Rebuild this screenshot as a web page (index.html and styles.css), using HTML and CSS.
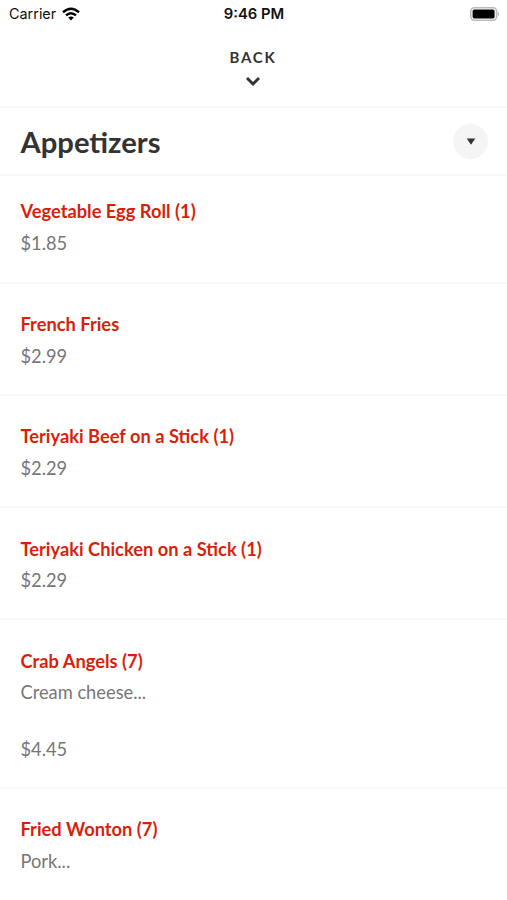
FILE: index.html
```html
<!DOCTYPE html>
<html lang="en">
<head>
<meta charset="utf-8">
<title>Appetizers</title>
<link rel="stylesheet" href="styles.css">
</head>
<body>
<header class="status">
  <div class="carrier"><span>Carrier</span>
    <svg class="wifi" viewBox="0 0 18 14"><g fill="none" stroke="#000" stroke-width="2.5"><path d="M1 5.2Q9-1.7 17 5.2"/><path d="M4 8.4Q9 4.1 14 8.4"/></g><path d="M6.2 10.6Q9 8.4 11.8 10.6L9 13.4Z"/></svg>
  </div>
  <div class="time">9:46 PM</div>
  <svg class="battery" viewBox="0 0 30 14"><rect x=".8" y=".8" width="25.8" height="12.4" rx="3.6" fill="none" stroke="#bbb" stroke-width="1.6"/><rect x="2.6" y="2.6" width="22" height="8.8" rx="1.6"/><path d="M27.8 4.7Q30.8 7 27.8 9.3Z" fill="#bbb"/></svg>
</header>
<nav class="back">
  <span class="back-label">BACK</span>
  <svg class="chevron" viewBox="0 0 16 10"><path d="M2 2L8 8L14 2" fill="none" stroke="#333" stroke-width="2.9"/></svg>
</nav>
<div class="section">
  <h1>Appetizers</h1>
  <button class="toggle" aria-label="Choose section"><svg viewBox="0 0 10 7"><path d="M.7.5H9.3L5 6.7Z" fill="#333"/></svg></button>
</div>
<main>
  <article class="item first"><h2>Vegetable Egg Roll (1)</h2><p>$1.85</p></article>
  <article class="item"><h2>French Fries</h2><p>$2.99</p></article>
  <article class="item"><h2>Teriyaki Beef on a Stick (1)</h2><p>$2.29</p></article>
  <article class="item"><h2>Teriyaki Chicken on a Stick (1)</h2><p>$2.29</p></article>
  <article class="item described"><h2>Crab Angels (7)</h2><p>Cream cheese...</p><p class="price">$4.45</p></article>
  <article class="item last"><h2>Fried Wonton (7)</h2><p>Pork...</p></article>
</main>
</body>
</html>
```

FILE: styles.css
```css
* { box-sizing: border-box; }
body { margin: 0; height: 900px; overflow: hidden; background: #fff; color: #333; font-family: Lato, sans-serif; }
h1, h2, p { margin: 0; }
.status { height: 28px; display: grid; grid-template-columns: 1fr auto 1fr; align-items: center; padding: 0 7px 0 9px; font: 14.8px/28px Inter, sans-serif; color: #111; }
.carrier { display: flex; align-items: center; gap: 6px; font-size: 14.4px; }
.wifi { width: 18px; height: 14px; margin-top: -1px; }
.time { font-weight: 600; margin-left: -1px; }
.battery { width: 30px; height: 14px; justify-self: end; margin-top: -1px; }
.back { height: 80px; display: flex; flex-direction: column; align-items: center; padding: 19px 1px 0 0; border-bottom: 2px solid #f7f7f7; }
.back-label { font-size: 15px; line-height: 20px; font-weight: 700; letter-spacing: 1.7px; }
.chevron { width: 16px; height: 10px; margin-top: 9px; }
.section { height: 68px; display: flex; align-items: center; justify-content: space-between; padding: 0 19px 0 20.5px; border-bottom: 2px solid #f7f7f7; }
h1 { font-size: 29.2px; line-height: 36px; font-weight: 700; margin-top: 2px; }
.toggle { width: 35px; height: 35px; padding: 0; border: 0; border-radius: 50%; background: #f5f5f5; display: grid; place-items: center; }
.toggle svg { width: 10px; height: 7px; }
.item { height: 112.3px; padding: 28px 20.5px 0; border-bottom: 2px solid #f8f8f8; font-size: 18.3px; }
.item.first { height: 107.6px; padding-top: 23.4px; }
.item:not(.first) { padding-top: 28.4px; }
.item.described { height: 168.6px; }
.item.last { border: 0; }
h2 { font-size: 18.3px; line-height: 24px; font-weight: 700; color: #d91f0b; }
.item p { line-height: 24px; margin-top: 7.6px; color: #777; }
.item .price { margin-top: 32.2px; }
```
